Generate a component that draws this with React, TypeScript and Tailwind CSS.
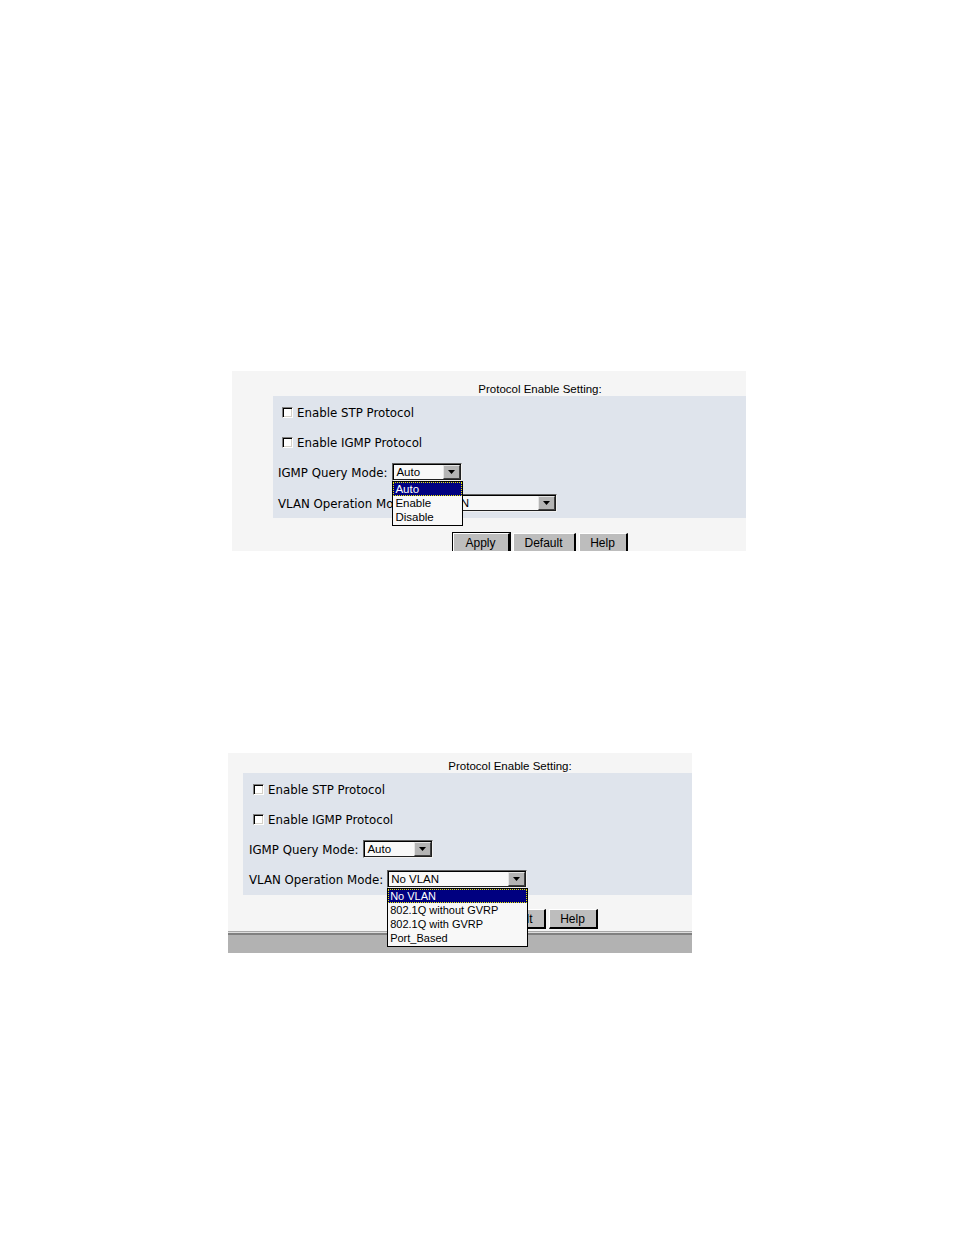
import React from "react";

const verd = "font-[family-name:'DejaVu_Sans',Verdana,sans-serif]";
const arial = "font-[family-name:'Liberation_Sans',Arial,sans-serif]";

function Check() {
  return (
    <span className="inline-block w-[11px] h-[11px] bg-white border border-t-[#808080] border-l-[#808080] border-r-white border-b-white shadow-[inset_1px_1px_0_#000,inset_-1px_-1px_0_#d4d0c8]" />
  );
}

function Arrow() {
  return (
    <span className="absolute right-[1px] top-[1px] bottom-[1px] w-[17px] bg-[#b4b4b4] border border-t-[#e4e4e4] border-l-[#e4e4e4] border-r-[#404040] border-b-[#404040] flex items-center justify-center">
      <svg width="7" height="4" viewBox="0 0 7 4">
        <path d="M0 0H7L3.5 4Z" fill="#000" />
      </svg>
    </span>
  );
}

function SelectBox({ value, wide, children }: { value: string; wide?: boolean; children?: React.ReactNode }) {
  return (
    <div className={"relative " + (wide ? "w-[140px]" : "w-[70px]")}>
      <div className="relative h-[18px] bg-[#f8f8f8] border border-t-[#606060] border-l-[#606060] border-r-[#f0f0f0] border-b-[#f0f0f0] shadow-[inset_1px_1px_0_#000,inset_-1px_-1px_0_#202020]">
        <span className={"absolute left-[3px] top-0 leading-[16px] text-[11.5px] text-black " + arial}>{value}</span>
        <Arrow />
      </div>
      {children}
    </div>
  );
}

function Item({ label, active }: { label: string; active?: boolean }) {
  return active ? (
    <div className="h-[14px] leading-[12px] pl-[1px] bg-[#000080] text-white border border-dotted border-[#e8e800]">{label}</div>
  ) : (
    <div className="h-[14px] leading-[14px] pl-[2px] text-black">{label}</div>
  );
}

function Btn({ label, w, def }: { label: string; w: string; def?: boolean }) {
  return (
    <div
      className={
        "h-[20px] shrink-0 bg-[#bdbdbd] border-t border-l border-t-white border-l-white border-r-2 border-b-2 border-r-black border-b-black flex items-center justify-center text-[12px] text-black " +
        arial +
        " " +
        w +
        (def ? " shadow-[0_0_0_1px_#000]" : "")
      }
    >
      {label}
    </div>
  );
}

function Row({ children, cls }: { children: React.ReactNode; cls: string }) {
  return <div className={"flex items-center h-[18px] " + cls}>{children}</div>;
}

function Label({ text, cls }: { text: string; cls?: string }) {
  return <span className={"pt-[4px] text-[11.8px] text-black " + verd + " " + (cls || "")}>{text}</span>;
}

function CheckRow({ label, cls }: { label: string; cls: string }) {
  return (
    <Row cls={cls}>
      <span className="ml-[4px] flex items-center">
        <Check />
      </span>
      <Label text={label} cls="ml-[4px]" />
    </Row>
  );
}

function Panel1() {
  return (
    <div className="ml-[232px] w-[514px] h-[180px] overflow-hidden bg-[#f5f5f5]">
      <div className="w-[616px]">
        <div className={"h-[25px] pt-[11px] leading-[14px] text-center text-[11.5px] text-black " + arial}>
          Protocol Enable Setting:
        </div>
        <div className="ml-[41px] h-[122px] bg-[#dfe4ec] pl-[5px] pt-[7px] flex flex-col">
          <CheckRow label="Enable STP Protocol" cls="" />
          <CheckRow label="Enable IGMP Protocol" cls="mt-[12px]" />
          <Row cls="mt-[12px] gap-[5px] relative z-10">
            <Label text="IGMP Query Mode:" />
            <SelectBox value="Auto">
              <div className={"absolute left-0 top-[18px] w-[71px] h-[45px] bg-[#f8f8f8] border border-black text-[11.5px] " + arial}>
                <Item label="Auto" active />
                <Item label="Enable" />
                <Item label="Disable" />
              </div>
            </SelectBox>
          </Row>
          <Row cls="mt-[13px] gap-[5px]">
            <Label text="VLAN Operation Mode:" />
            <SelectBox value="No VLAN" wide />
          </Row>
        </div>
        <div className="mt-[15px] flex justify-center gap-[3px]">
          <Btn label="Apply" w="w-[57px]" def />
          <Btn label="Default" w="w-[63px]" />
          <Btn label="Help" w="w-[49px]" />
        </div>
      </div>
    </div>
  );
}

function Panel2() {
  return (
    <div className="mt-[202px] ml-[228px] w-[464px] h-[200px] overflow-hidden bg-[#f5f5f5]">
      <div className="w-[564px]">
        <div className={"h-[20px] pt-[6px] leading-[14px] text-center text-[11.5px] text-black " + arial}>
          Protocol Enable Setting:
        </div>
        <div className="ml-[15px] h-[122px] bg-[#dfe4ec] pl-[6px] pt-[7px] flex flex-col">
          <CheckRow label="Enable STP Protocol" cls="" />
          <CheckRow label="Enable IGMP Protocol" cls="mt-[12px]" />
          <Row cls="mt-[12px] gap-[5px]">
            <Label text="IGMP Query Mode:" />
            <SelectBox value="Auto" />
          </Row>
          <Row cls="mt-[12px] gap-[4px] relative z-10">
            <Label text="VLAN Operation Mode:" />
            <SelectBox value="No VLAN" wide>
              <div className={"absolute left-0 top-[18px] w-[141px] h-[59px] bg-[#f8f8f8] border border-black text-[11px] " + arial}>
                <Item label="No VLAN" active />
                <Item label="802.1Q without GVRP" />
                <Item label="802.1Q with GVRP" />
                <Item label="Port_Based" />
              </div>
            </SelectBox>
          </Row>
        </div>
        <div className="mt-[14px] flex justify-center gap-[3px]">
          <Btn label="Apply" w="w-[57px]" def />
          <Btn label="Default" w="w-[63px]" />
          <Btn label="Help" w="w-[49px]" />
        </div>
        <div className="mt-[2px] h-[1px] bg-[#a8a8a8]" />
        <div className="h-[1px] bg-[#dcdcdc]" />
        <div className="h-[2px] bg-[#808080]" />
        <div className="h-[18px] bg-[#b2b2b2]" />
      </div>
    </div>
  );
}

export default function App() {
  return (
    <div className="w-[954px] h-[1235px] bg-white pt-[371px] overflow-hidden">
      <Panel1 />
      <Panel2 />
    </div>
  );
}
